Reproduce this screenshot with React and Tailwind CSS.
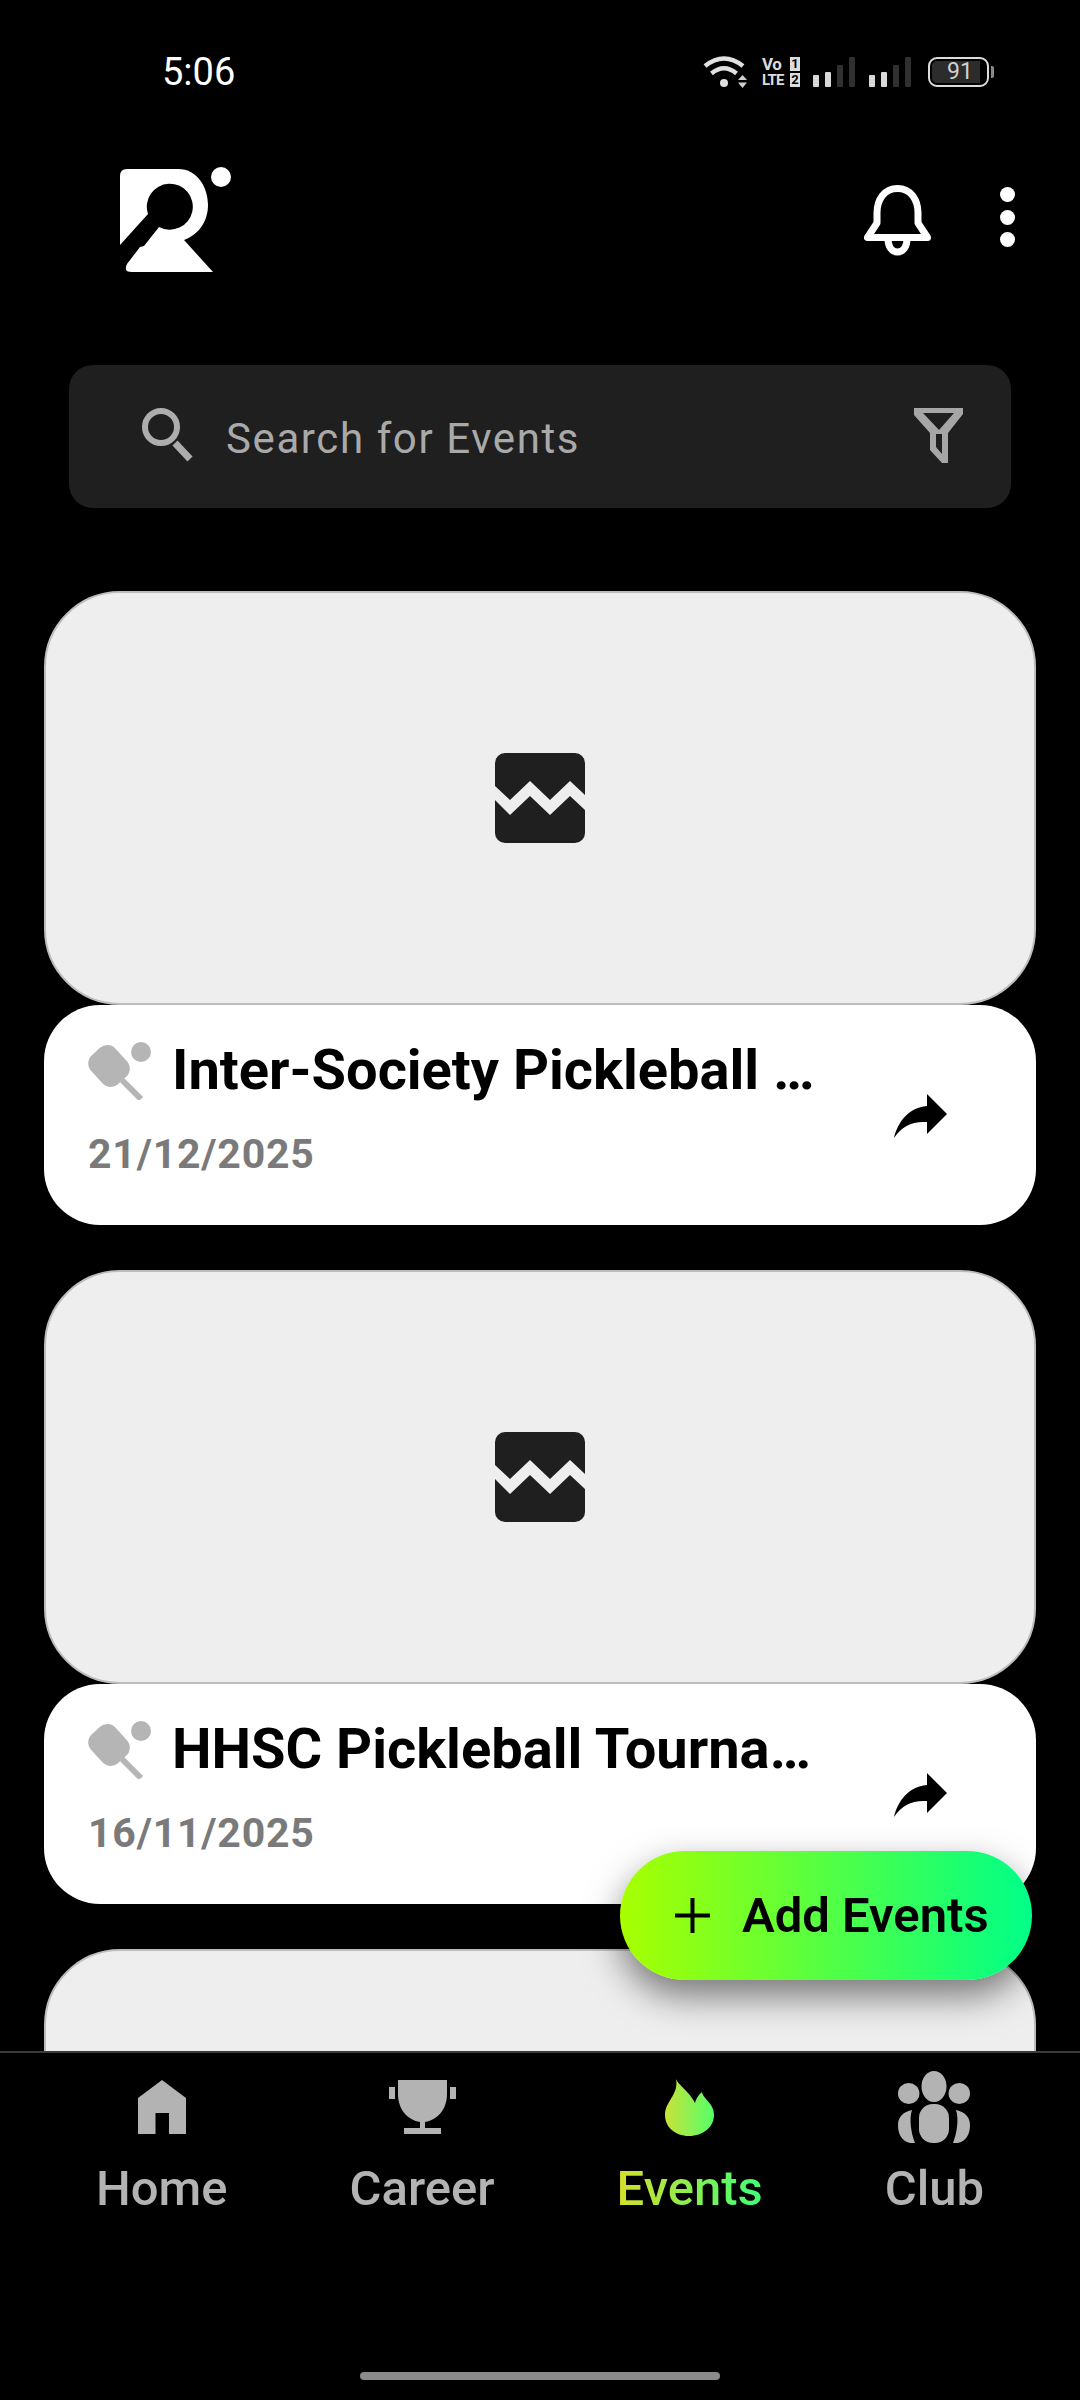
import React from 'react';

const events = [
  { title: 'Inter-Society Pickleball …', date: '21/12/2025' },
  { title: 'HHSC Pickleball Tourna…', date: '16/11/2025' },
];

function Signal() {
  return (
    <div className="flex items-end gap-[6px] h-[30px]">
      <div className="w-[6px] h-[12px] rounded-[1px] bg-[#d8d8d8]" />
      <div className="w-[6px] h-[15px] rounded-[1px] bg-[#d8d8d8]" />
      <div className="w-[6px] h-[22px] rounded-[1px] bg-[#303030]" />
      <div className="w-[6px] h-[30px] rounded-[1px] bg-[#303030]" />
    </div>
  );
}

function StatusBar() {
  return (
    <div className="h-[130px] flex items-start pl-[162px] pr-[86px] pt-[50px] text-white">
      <span className="text-[38px] leading-[44px] font-normal">5:06</span>
      <div className="ml-auto flex items-center gap-[14px] mt-[5px]">
        <svg width="46" height="34" viewBox="0 0 46 34" fill="none">
          <path d="M2 11Q21-4 40 11" stroke="#e0e0e0" strokeWidth="4.5" />
          <path d="M8.5 18.5Q21 8 33.5 18.5" stroke="#e0e0e0" strokeWidth="4.5" />
          <circle cx="21" cy="28" r="4" fill="#e0e0e0" />
          <path d="M35 25L39.5 20L44 25ZM35 27.5H44L39.5 33Z" fill="#d0d0d0" />
        </svg>
        <div className="w-[38px] -ml-[1px] -mr-[1px] flex flex-col gap-[2px] text-[#dcdcdc] font-bold">
          <div className="flex justify-between items-center h-[14px]">
            <span className="text-[17px] leading-[14px] tracking-[-0.5px]">Vo</span>
            <span className="w-[10px] h-[14px] bg-[#dcdcdc] text-black text-[13px] leading-[14px] text-center">1</span>
          </div>
          <div className="flex justify-between items-center h-[14px]">
            <span className="text-[15px] leading-[14px] tracking-[-0.9px]">LTE</span>
            <span className="w-[10px] h-[14px] bg-[#dcdcdc] text-black text-[13px] leading-[14px] text-center">2</span>
          </div>
        </div>
        <Signal />
        <Signal />
        <div className="flex items-center gap-[2px] ml-[3px]">
          <div className="w-[61px] h-[30px] border-2 border-[#dcdcdc] rounded-[9px] p-[2px]">
            <div className="w-[48px] h-full bg-[#2c2c2c] rounded-l-[5px] text-[#d0d0d0] text-[23px] leading-[22px] text-center pl-[8px]">91</div>
          </div>
          <div className="w-[3px] h-[12px] rounded-r-[2px] bg-[#8a8a8a]" />
        </div>
      </div>
    </div>
  );
}

function Logo() {
  return (
    <svg width="180" height="150" viewBox="0 0 180 150">
      <path
        d="M30 105L30 36Q30 29 37 29L88 29C108 29 118 48 118 65C118 82 108 95 94 100L123 132L42 132Q33 132 37 124L50 107L54 106L69 87A23 23 0 1 0 58 74Z"
        fill="#fff"
      />
      <circle cx="131" cy="37" r="10" fill="#fff" />
    </svg>
  );
}

function Header() {
  return (
    <div className="h-[150px] mt-[10px] flex items-center justify-between pl-[90px] pr-[65px]">
      <Logo />
      <div className="flex items-center gap-[69px] mt-[4px]">
        <svg width="67" height="71" viewBox="0 0 67 71" fill="none" stroke="#fff" strokeWidth="7" className="mt-[6px]">
          <path d="M33.5 3.5C20 3.5 13 15 13 28V38L3.5 52.5H63.5L54 38V28C54 15 47 3.5 33.5 3.5Z" strokeLinejoin="round" />
          <path d="M24 54C24 62 28 67 33.5 67C39 67 43 62 43 54" />
        </svg>
        <div className="flex flex-col gap-[7.5px]">
          <div className="w-[15px] h-[15px] rounded-full bg-white" />
          <div className="w-[15px] h-[15px] rounded-full bg-white" />
          <div className="w-[15px] h-[15px] rounded-full bg-white" />
        </div>
      </div>
    </div>
  );
}

function SearchBar() {
  return (
    <div className="mt-[75px] mx-[69px] h-[143px] shrink-0 rounded-[24px] bg-[#1f1f1f] flex items-center pl-[61px] pr-[31px]">
      <svg width="80" height="70" viewBox="0 0 80 70" fill="none" stroke="#adadad" className="shrink-0 -mt-[4px]">
        <circle cx="31" cy="27" r="16" strokeWidth="6" />
        <path d="M45 43L60 59" strokeWidth="7" />
      </svg>
      <span className="ml-[16px] mt-[5px] text-[42px] leading-[48px] tracking-[1.6px] text-[#a9a9a9]">Search for Events</span>
      <svg width="80" height="70" viewBox="0 0 80 70" className="ml-auto shrink-0 -mt-[6px]">
        <path
          fillRule="evenodd"
          fill="#a6a6a6"
          d="M14 9H63V15L48 34V64H42L30 51V34L14 16ZM23 14L39 31L54 14ZM36 35V48L42 55V35Z"
        />
      </svg>
    </div>
  );
}

function BrokenImage() {
  return (
    <svg width="90" height="90" viewBox="0 0 90 90">
      <rect width="90" height="90" rx="10" fill="#1f1f1f" />
      <path d="M0 33L15 47L35 28L55 47L75 28L90 42V57L75 43L55 62L35 43L15 62L0 47Z" fill="#eeeeee" />
    </svg>
  );
}

function Paddle() {
  return (
    <svg width="100" height="80" viewBox="0 0 100 80" className="shrink-0">
      <g fill="#b5b5b5">
        <rect x="20.5" y="26.5" width="33" height="39" rx="11" transform="rotate(-42 37 46)" />
        <circle cx="69" cy="32" r="10" />
      </g>
      <path d="M50 60L69 79" stroke="#b5b5b5" strokeWidth="6" />
    </svg>
  );
}

function EventCard({ title, date }) {
  return (
    <div className="shrink-0">
      <div className="h-[414px] rounded-[76px] border-2 border-[#bdbdbd] bg-[#eeeeee] flex items-center justify-center">
        <BrokenImage />
      </div>
      <div className="h-[220px] rounded-[56px] bg-white flex items-start justify-between pr-[76px]">
        <div className="pt-[15px]">
          <div className="flex items-center pl-[28px] h-[80px]">
            <Paddle />
            <span className="mt-[20px] text-[56px] leading-[60px] font-bold text-black whitespace-nowrap">{title}</span>
          </div>
          <div className="pl-[44px] mt-[31px] text-[41px] leading-[46px] font-bold tracking-[0.8px] text-[#7a7a7a]">{date}</div>
        </div>
        <svg width="80" height="70" viewBox="0 0 80 70" className="mt-[75px]">
          <path d="M47 14L67 34L47 54V42C32 41 22 46 14 58C18 42 28 28 47 26Z" fill="#000" />
        </svg>
      </div>
    </div>
  );
}

function NavItem({ label, active, children }) {
  return (
    <div className="flex flex-col items-center">
      <div className="h-[72px] flex items-center">{children}</div>
      <span
        className={`mt-[20px] text-[49px] leading-[52px] font-medium ${
          active ? 'bg-linear-to-r/srgb from-[#d6e02a] to-[#3dff78] bg-clip-text text-transparent' : 'text-[#b3b3b3]'
        }`}
      >
        {label}
      </span>
    </div>
  );
}

function BottomNav() {
  return (
    <div className="h-[349px] shrink-0 bg-black border-t-2 border-[#3a3a3a] flex flex-col">
      <div className="flex justify-center gap-[122px] pt-[18px]">
        <NavItem label="Home">
          <svg width="48" height="54" viewBox="0 0 48 54">
            <path d="M24 0L48 18V54H31V33H17.5V54H0V18Z" fill="#b3b3b3" />
          </svg>
        </NavItem>
        <NavItem label="Career">
          <svg width="67" height="54" viewBox="0 0 67 54" fill="#b3b3b3">
            <path d="M9 0H58V14C58 30 48 40 36 42V48H52V54H15V48H31V42C19 40 9 30 9 14Z" />
            <rect x="0" y="7" width="6" height="12" />
            <rect x="61" y="7" width="6" height="12" />
          </svg>
        </NavItem>
        <NavItem label="Events" active>
          <svg width="49" height="57" viewBox="0 0 49 57">
            <defs>
              <linearGradient id="flame" x1="0" x2="1" y1="0" y2="0">
                <stop offset="0" stopColor="#c8e238" />
                <stop offset="1" stopColor="#55ff6a" />
              </linearGradient>
            </defs>
            <path
              d="M11 0C13 6 24 12 30 24C31 20 33 16 37 13C38 20 49 24 49 36C49 48 38 57 24 57C10 57 0 48 0 36C0 22 14 16 11 0Z"
              fill="url(#flame)"
            />
          </svg>
        </NavItem>
        <NavItem label="Club">
          <svg width="72" height="72" viewBox="0 0 72 72" fill="#b3b3b3">
            <ellipse cx="36" cy="15.5" rx="12.5" ry="15.5" />
            <ellipse cx="10.7" cy="22.5" rx="10.7" ry="10.5" />
            <ellipse cx="61.3" cy="22.5" rx="10.7" ry="10.5" />
            <rect x="21" y="33" width="30" height="39" rx="14" />
            <path d="M14 39C4 41 0 47 0 54C0 62 3 70 12 72H17C13 62 11 48 14 39Z" />
            <path d="M58 39C68 41 72 47 72 54C72 62 69 70 60 72H55C59 62 61 48 58 39Z" />
          </svg>
        </NavItem>
      </div>
      <div className="mt-auto mb-[20px] self-center w-[360px] h-[8px] rounded-full bg-[#8a8a8a]" />
    </div>
  );
}

export default function App() {
  return (
    <div className="relative w-[1080px] h-[2400px] bg-black overflow-hidden flex flex-col font-[Roboto,sans-serif]">
      <StatusBar />
      <Header />
      <SearchBar />

      <div className="flex-1 min-h-0 overflow-hidden mt-[83px] px-[44px] flex flex-col gap-[45px]">
        {events.map(e => (
          <EventCard key={e.date} title={e.title} date={e.date} />
        ))}
        <div className="shrink-0">
          <div className="h-[414px] rounded-[76px] border-2 border-[#bdbdbd] bg-[#eeeeee]" />
        </div>
      </div>

      <BottomNav />

      <button className="absolute left-[620px] top-[1851px] w-[412px] h-[129px] rounded-full bg-linear-to-r/srgb from-[#a8ff00] to-[#00ff88] shadow-[0_16px_36px_rgba(0,0,0,0.5)] flex items-center pl-[55px] text-black">
        <svg width="35" height="35" viewBox="0 0 35 35" stroke="#000" strokeWidth="4">
          <path d="M17.5 0V35M0 17.5H35" />
        </svg>
        <span className="ml-[32px] text-[49px] leading-[54px] font-semibold whitespace-nowrap">Add Events</span>
      </button>
    </div>
  );
}
